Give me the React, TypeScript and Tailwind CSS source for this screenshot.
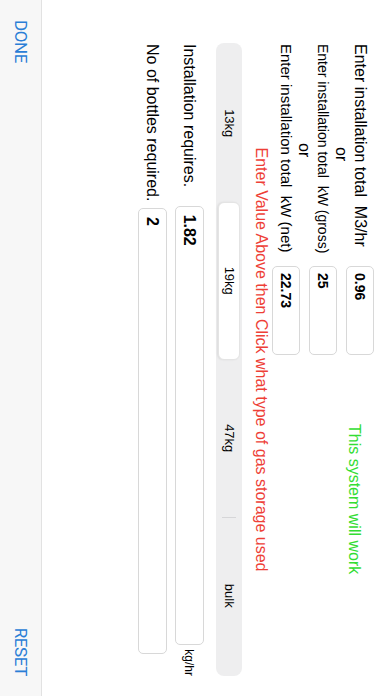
import React from "react";

const font = { fontFamily: '"Liberation Sans", Arial, Helvetica, sans-serif' };

function InputRow({ label, value, size, extra }: { label: string; value: string; size: string; extra?: React.ReactNode }) {
  return (
    <div className="flex h-[28px] items-center">
      <div className={`w-[223px] pl-px leading-[18px] text-black whitespace-pre ${size}`}>{label}</div>
      <div className="flex h-[28px] w-[89px] items-center rounded-[5px] border border-[#d8d8d8] pl-[6px] text-[14px] font-bold text-black">
        {value}
      </div>
      {extra}
    </div>
  );
}

function Or({ indent }: { indent: string }) {
  return (
    <div className="flex h-[9px] items-center">
      <span className={`text-[16px] leading-[18px] text-black ${indent}`}>or</span>
    </div>
  );
}

function ResultRow({ label, value, unit, className }: { label: string; value: string; unit?: string; className: string }) {
  return (
    <div className={`flex h-[29px] items-center ${className}`}>
      <div className="w-[165px] pl-px text-[16px] leading-[18px] text-black whitespace-pre">{label}</div>
      <div className="flex h-[29px] w-[446px] items-center rounded-[5px] border border-[#d8d8d8] pl-[8px] text-[16px] font-bold text-black">
        {value}
      </div>
      {unit ? <div className="ml-[4px] text-[12px] leading-[14px] text-black">{unit}</div> : null}
    </div>
  );
}

export default function App() {
  const segs = ["13kg", "19kg", "47kg", "bulk"];
  return (
    <div className="relative h-[696px] w-[392px] overflow-hidden bg-white" style={font}>
      <div className="absolute left-[392px] top-0 flex h-[392px] w-[696px] origin-top-left rotate-90 flex-col bg-white">
        <div className="flex-1">
          <div className="ml-[43px] w-[633px] pt-[18px]">
            <InputRow
              label="Enter installation total  M3/hr"
              value="0.96"
              size="text-[16px]"
              extra={
                <span className="ml-[69px] mt-[12px] text-[16px] leading-[18px] text-[#33dd33]">This system will work</span>
              }
            />
            <Or indent="ml-[104px]" />
            <InputRow label="Enter installation total  kW (gross)" value="25" size="text-[14px]" />
            <Or indent="ml-[100px]" />
            <InputRow label="Enter installation total  kW (net)" value="22.73" size="text-[15px]" />

            <div className="mt-[2px] text-center text-[16px] leading-[18px] text-[#ee3f37]">
              Enter Value Above then Click what type of gas storage used
            </div>

            <div className="mt-[10px] flex h-[26px] rounded-[8px] bg-[#eeeeef] p-[2px]">
              {segs.map((s, i) => (
                <React.Fragment key={s}>
                  {i === 3 ? <div className="my-[4px] w-px bg-[#d6d6d8]" /> : null}
                  <div
                    className={
                      i === 1
                        ? "flex flex-1 items-center justify-center rounded-[6px] border border-[#e4e4e4] bg-white text-[13px] text-black shadow-[0_1px_2px_rgba(0,0,0,0.08)]"
                        : "flex flex-1 items-center justify-center text-[13px] text-black"
                    }
                  >
                    {s}
                  </div>
                </React.Fragment>
              ))}
            </div>

            <ResultRow className="mt-[12px]" label="Installation requires." value="1.82" unit="kg/hr" />
            <ResultRow className="mt-[8px]" label="No of bottles required." value="2" />
          </div>
        </div>
        <div
          className="flex h-[42px] items-center justify-between border-t border-[#e2e2e2] bg-[#f7f7f7] px-[20px] text-[17px] tracking-[-0.4px] text-[#2a7ed6]"
          style={{ fontFamily: 'Roboto, "Liberation Sans", sans-serif' }}
        >
          <span>DONE</span>
          <span>RESET</span>
        </div>
      </div>
    </div>
  );
}
